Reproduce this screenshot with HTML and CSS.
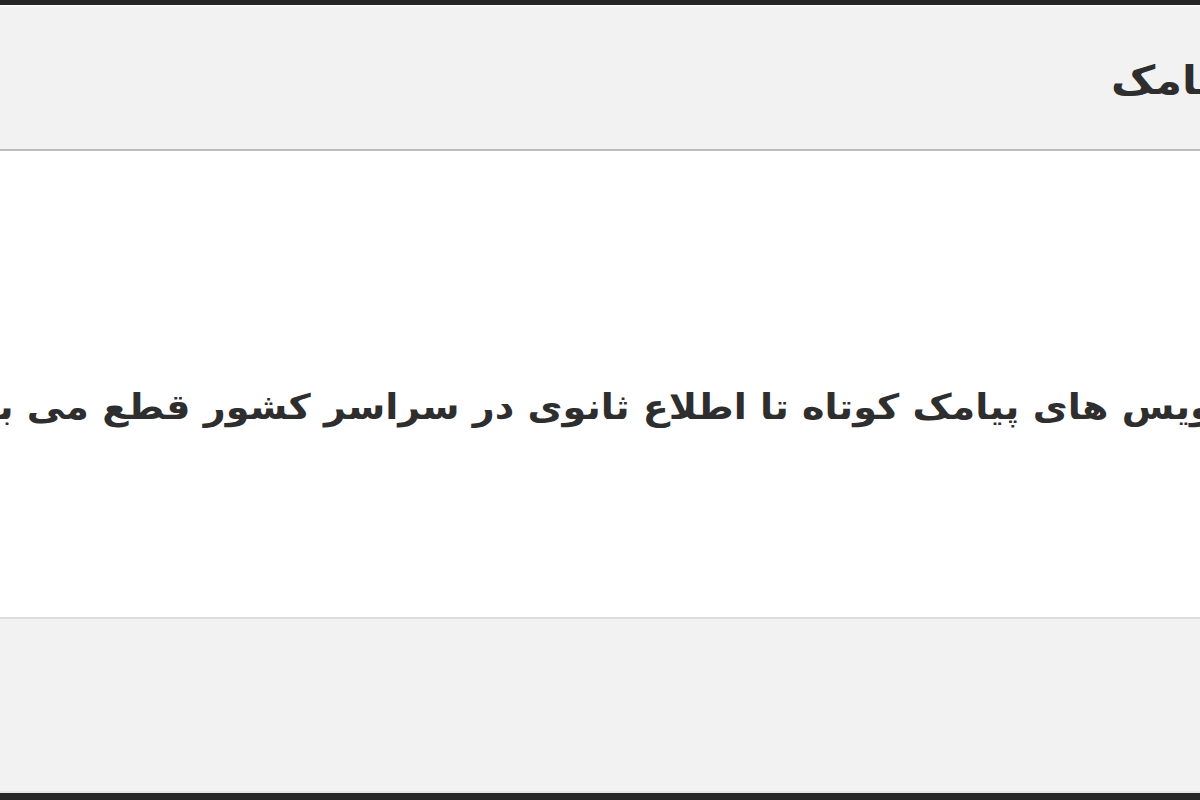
FILE: index.html
```html
<!DOCTYPE html>
<html lang="fa">
<head>
<meta charset="utf-8">
<link rel="stylesheet" href="styles.css">
</head>
<body>
<div class="frame">
  <div class="dialog" dir="rtl">
    <div class="dialog-header"><span class="title">پیامک</span></div>
    <div class="dialog-body"><p class="message">سرویس های پیامک کوتاه تا اطلاع ثانوی در سراسر کشور قطع می باشد</p></div>
    <div class="dialog-footer"></div>
  </div>
</div>
</body>
</html>
```
FILE: styles.css
```css
html, body {
  margin: 0;
  padding: 0;
  overflow: hidden;
  background: #2a2a2a;
}
.frame {
  height: 800px;
  box-sizing: border-box;
  padding: 5px 0 7px;
  background: #262626;
  display: flex;
  flex-direction: column;
  overflow: hidden;
}
.dialog {
  flex: 1;
  display: flex;
  flex-direction: column;
  margin: 0 -300px;
  font-family: "DejaVu Sans", sans-serif;
  font-weight: bold;
  color: #2e2e2e;
}
.dialog-header {
  height: 142px;
  background: #f2f2f2;
  border-top: 2px solid #fafafa;
  border-bottom: 2px solid #bdbdbd;
  display: flex;
  align-items: center;
  padding-right: 268px;
}
.title {
  display: inline-block;
  font-size: 40px;
  padding-top: 4px;
  transform: scaleX(1.08);
  transform-origin: right center;
}
.dialog-body {
  flex: 1;
  background: #ffffff;
  display: flex;
  align-items: center;
  justify-content: center;
  padding-top: 46px;
}
.message {
  margin: 0;
  font-size: 35px;
  white-space: nowrap;
  transform: scaleX(1.09);
}
.dialog-footer {
  height: 172px;
  background: #f2f2f2;
  border-top: 2px solid #dcdcdc;
  border-bottom: 2px solid #e6e6e6;
}
```
